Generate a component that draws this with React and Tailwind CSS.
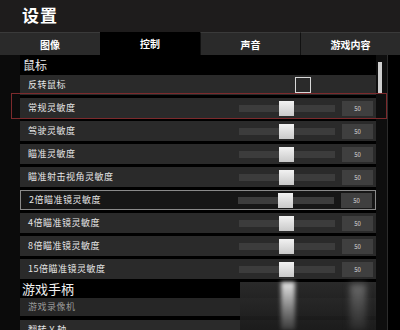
import React from 'react';

const tabs = ['图像', '控制', '声音', '游戏内容'];

const mouseRows = [
  { label: '常规灵敏度', hl: 'red' },
  { label: '驾驶灵敏度' },
  { label: '瞄准灵敏度' },
  { label: '瞄准射击视角灵敏度' },
  { label: '2倍瞄准镜灵敏度', hl: 'focus' },
  { label: '4倍瞄准镜灵敏度' },
  { label: '8倍瞄准镜灵敏度' },
  { label: '15倍瞄准镜灵敏度' },
];

const Slider = () => (
  <div className="flex items-center">
    <div className="relative w-[96px] h-[7px] bg-[#3c3c3c]">
      <div className="absolute left-[40px] -top-[4px] w-[15px] h-[15px] bg-gradient-to-b from-[#f2f2f2] to-[#c9c9c9]" />
    </div>
    <div className="ml-[7px] w-[31px] h-[15px] bg-[#3f3f3f] flex items-center justify-center text-[6px] text-[#d8d8d8]">
      50
    </div>
  </div>
);

const SliderRow = ({ label, hl }) => (
  <div
    className={
      'relative h-[20px] mt-[3px] flex items-center justify-between pl-[8px] pr-[3px] ' +
      (hl === 'focus' ? 'bg-[#161616] border border-[#8a8a8a]' : 'bg-[#2a2a2a]')
    }
  >
    <span className="text-[9px] text-[#e6e6e6] tracking-[0.5px]">{label}</span>
    <Slider />
    {hl === 'red' && (
      <div className="absolute -left-[9px] -right-[11px] -top-[5px] -bottom-[1px] border-[1.5px] border-[#7c2a2c]" />
    )}
  </div>
);

export default function App() {
  return (
    <div
      className="w-[400px] h-[330px] overflow-hidden bg-black text-white relative"
      style={{ fontFamily: '"Noto Sans CJK SC", "Noto Sans", sans-serif' }}
    >
      <div className="h-[32px] bg-[#1e1c1c] flex items-center pl-[22px] pb-[2px]">
        <span className="text-[17px] font-bold tracking-[1px]">设置</span>
      </div>

      <div className="grid grid-cols-4 h-[23px]">
        {tabs.map((t, i) => (
          <div
            key={t}
            className={
              'flex items-center justify-center text-[10px] font-bold ' +
              (i === 1
                ? 'bg-black'
                : 'bg-[#2a2a2a] border-t border-[#3a3a3a] ' + (i > 1 ? 'border-l border-l-[#111]' : ''))
            }
          >
            {t}
          </div>
        ))}
      </div>

      <div className="flex h-[275px]">
        <div className="w-[20px] bg-[#0b0b0b]" />

        <div className="w-[356px]">
          <div className="h-[20px] flex items-center pl-[3px] text-[12px] text-[#e8e8e8]">鼠标</div>

          <div className="h-[20px] flex items-center justify-between pl-[8px] bg-[#2a2a2a]">
            <span className="text-[9px] text-[#e6e6e6] tracking-[0.5px]">反转鼠标</span>
            <div className="mr-[65px] w-[16px] h-[16px] border border-[#d8d8d8]" />
          </div>

          {mouseRows.map((r) => (
            <SliderRow key={r.label} {...r} />
          ))}

          <div className="h-[19px] flex items-center pl-[2px] text-[13px] text-[#f0f0f0]">游戏手柄</div>

          <div className="h-[18px] flex items-center pl-[8px] bg-[#262626]">
            <span className="text-[9px] text-[#9a9a9a] tracking-[0.5px]">游戏录像机</span>
          </div>
          <div className="h-[20px] mt-[4px] flex items-center pl-[8px] bg-[#2a2a2a]">
            <span className="text-[9px] text-[#e6e6e6] tracking-[0.5px]">翻转 Y 轴</span>
          </div>
        </div>

        <div className="w-[12px] bg-[#0e0e0e] border-r border-[#2c2c2c] pl-[2px] pt-[7px]">
          <div className="w-[4px] h-[31px] bg-[#cfcfcf]" />
        </div>
        <div className="flex-1 bg-black" />
      </div>

      <div className="absolute left-[240px] top-[282px] w-[136px] h-[48px] bg-gradient-to-b from-[#2e2e2e] to-[#1a1a1a] opacity-90" />
      <div className="absolute left-[281px] top-[282px] w-[14px] h-[48px] bg-gradient-to-b from-[#e6e6e6] via-[#8a8a8a] to-[#3a3a3a] blur-[2px]" />
      <div className="absolute left-[350px] top-[284px] w-[16px] h-[46px] bg-gradient-to-b from-[#6a6a6a] to-[#2a2a2a] blur-[3px]" />
    </div>
  );
}
